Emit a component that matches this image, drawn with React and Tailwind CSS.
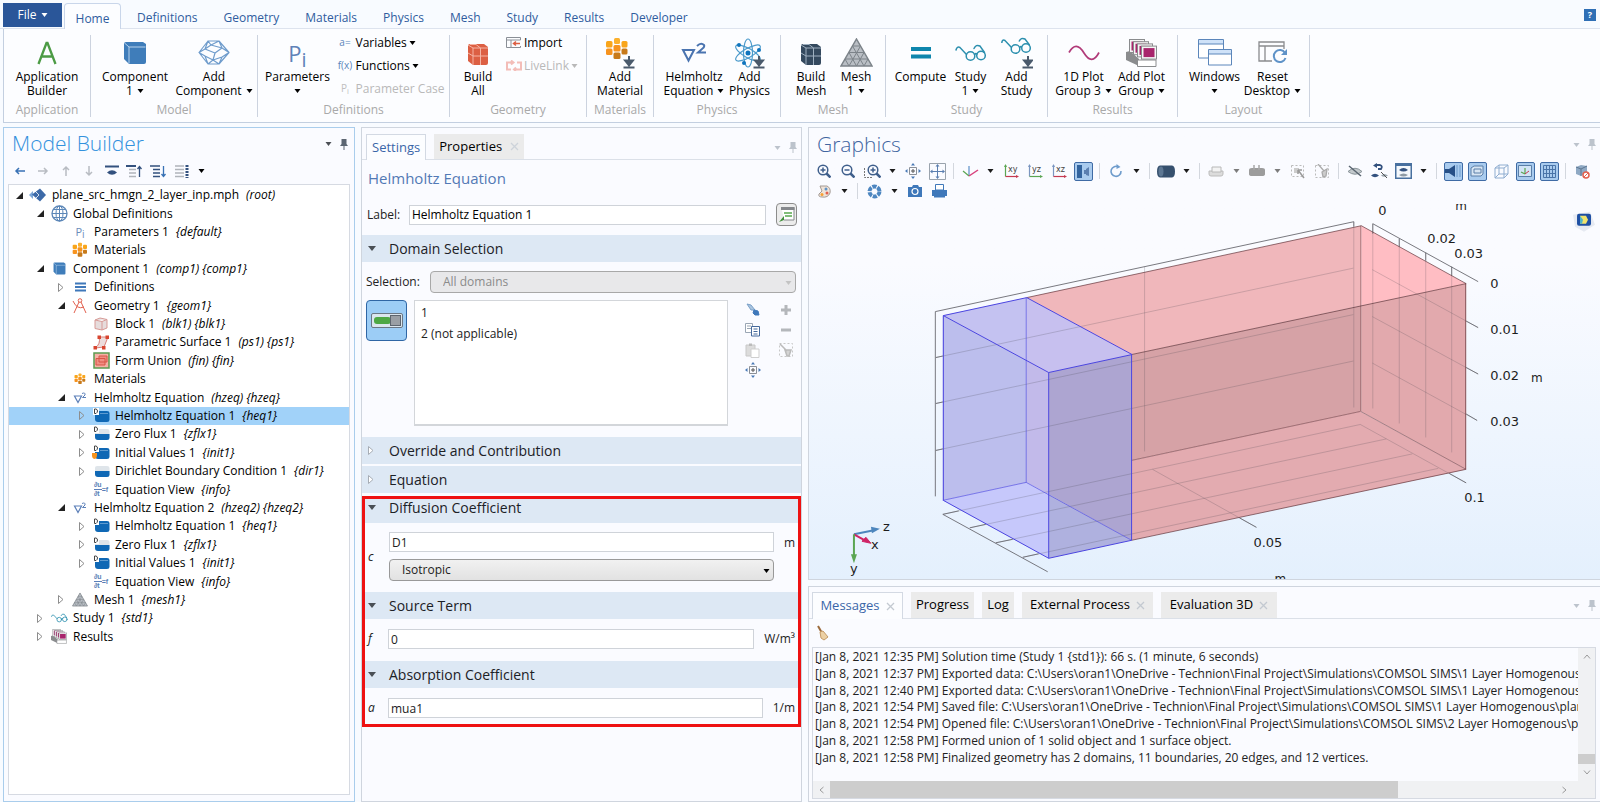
import React from 'react';
import clsx from 'clsx';

const menuTabs = ['Definitions', 'Geometry', 'Materials', 'Physics', 'Mesh', 'Study', 'Results', 'Developer'];

const indents = ['pl-1', 'pl-[25px]', 'pl-[46px]', 'pl-[67px]'];

// level, icon, name, tag, state of the arrow (open, closed or none)
const treeRows = [
  [0, 'root', 'plane_src_hmgn_2_layer_inp.mph', '(root)', 'open'],
  [1, 'globe', 'Global Definitions', '', 'open'],
  [2, 'pi', 'Parameters 1', '{default}', ''],
  [2, 'materials', 'Materials', '', ''],
  [1, 'component', 'Component 1', '(comp1) {comp1}', 'open'],
  [2, 'definitions', 'Definitions', '', 'closed'],
  [2, 'compass', 'Geometry 1', '{geom1}', 'open'],
  [3, 'block', 'Block 1', '(blk1) {blk1}', ''],
  [3, 'surface', 'Parametric Surface 1', '(ps1) {ps1}', ''],
  [3, 'union', 'Form Union', '(fin) {fin}', ''],
  [2, 'materialsSmall', 'Materials', '', ''],
  [2, 'nabla', 'Helmholtz Equation', '(hzeq) {hzeq}', 'open'],
  [3, 'domainD', 'Helmholtz Equation 1', '{heq1}', 'closed'],
  [3, 'boundaryD', 'Zero Flux 1', '{zflx1}', 'closed'],
  [3, 'initialD', 'Initial Values 1', '{init1}', 'closed'],
  [3, 'boundary', 'Dirichlet Boundary Condition 1', '{dir1}', 'closed'],
  [3, 'equation', 'Equation View', '{info}', ''],
  [2, 'nabla', 'Helmholtz Equation 2', '(hzeq2) {hzeq2}', 'open'],
  [3, 'domainD', 'Helmholtz Equation 1', '{heq1}', 'closed'],
  [3, 'boundaryD', 'Zero Flux 1', '{zflx1}', 'closed'],
  [3, 'domainD', 'Initial Values 1', '{init1}', 'closed'],
  [3, 'equation', 'Equation View', '{info}', ''],
  [2, 'mesh', 'Mesh 1', '{mesh1}', 'closed'],
  [1, 'study', 'Study 1', '{std1}', 'closed'],
  [1, 'results', 'Results', '', 'closed'],
];
const selectedRow = 12;

const messages = [
  '[Jan 8, 2021 12:35 PM] Solution time (Study 1 {std1}): 66 s. (1 minute, 6 seconds)',
  '[Jan 8, 2021 12:37 PM] Exported data: C:\\Users\\oran1\\OneDrive - Technion\\Final Project\\Simulations\\COMSOL SIMS\\1 Layer Homogenous\\',
  '[Jan 8, 2021 12:40 PM] Exported data: C:\\Users\\oran1\\OneDrive - Technion\\Final Project\\Simulations\\COMSOL SIMS\\1 Layer Homogenous\\',
  '[Jan 8, 2021 12:54 PM] Saved file: C:\\Users\\oran1\\OneDrive - Technion\\Final Project\\Simulations\\COMSOL SIMS\\1 Layer Homogenous\\plane',
  '[Jan 8, 2021 12:54 PM] Opened file: C:\\Users\\oran1\\OneDrive - Technion\\Final Project\\Simulations\\COMSOL SIMS\\2 Layer Homogenous\\plane',
  '[Jan 8, 2021 12:58 PM] Formed union of 1 solid object and 1 surface object.',
  '[Jan 8, 2021 12:58 PM] Finalized geometry has 2 domains, 11 boundaries, 20 edges, and 12 vertices.',
];

// ---------- icons ----------

function Svg({ w = 18, h = w, box, className, children }) {
  return (
    <svg width={w} height={h} viewBox={box || `0 0 ${w} ${h}`} fill="none" aria-hidden="true" className={clsx('shrink-0', className)}>
      {children}
    </svg>
  );
}

function Caret({ className = 'text-black' }) {
  return (
    <Svg w={7} h={4} className={clsx('inline-block', className)}>
      <path d="M0.500 0H6.500L3.500 4Z" fill="currentColor" />
    </Svg>
  );
}

function Glasses({ w = 32, h = 18, className }) {
  return (
    <Svg w={w} h={h} box="0 0 32 18" className={className}>
      <g stroke="#2b8fae" strokeWidth="1.500" strokeLinecap="round">
        <circle cx="15.500" cy="12" r="4.300" />
        <circle cx="26" cy="11.500" r="4.300" />
        <path d="M19.500 10.500Q20.800 9 22 10M11.500 10.500L5 3.500Q2 2 1 6M29.500 8.500L25 2Q21 0 19 4.500" />
      </g>
    </Svg>
  );
}

function DownArrow() {
  return <path d="M24 19V27M18.500 30.500H29.500M20 23.500L24 28.500L28 23.500Z" stroke="#4a5a6c" strokeWidth="2" fill="#4a5a6c" />;
}

function BrickCube({ color, edge }) {
  return (
    <Svg w={22} h={24} className="mt-1">
      <path d="M1 3Q1 1 3 1H17L21 4V20Q21 22 19 22H6L1 18Z" fill={color} />
      <path d="M1 2L6 5H21M6 5V22M1 10L6 13H21M13.500 5V22M3 1.500L9 1.500L13.500 5" stroke={edge} strokeWidth="1" />
    </Svg>
  );
}

function Hexes() {
  return (
    <g>
      <rect x="9" y="1" width="6" height="6" rx="1.500" fill="#fbb02d" />
      <rect x="1" y="4" width="6.500" height="6.500" rx="1.500" fill="#f9a51a" />
      <rect x="16.500" y="4" width="6" height="6.500" rx="1.500" fill="#f9a51a" />
      <rect x="8.500" y="8" width="7" height="6.500" rx="1.500" fill="#f7931e" />
      <rect x="1" y="11.500" width="6.500" height="6.500" rx="1.500" fill="#f7931e" />
      <rect x="16.500" y="11.500" width="6" height="6" rx="1.500" fill="#c87a1a" />
      <rect x="8.500" y="15.500" width="7" height="6.500" rx="1.500" fill="#c87a1a" />
    </g>
  );
}

function MeshTriangle({ w = 33, h = 29 }) {
  return (
    <Svg w={w} h={h} box="0 0 33 29">
      <path d="M16.500 1L32 28H1Z" fill="#b9bec4" stroke="#7c8389" strokeWidth="1.500" />
      <path d="M12.500 8H20.500M9 14.500H24M5 21H28M12.500 8L24 28M20.500 8L9 28M9 14.500L16.500 28M24 14.500L16.500 28M5 21L9 28M28 21L24 28" stroke="#7c8389" />
    </Svg>
  );
}

function PlotStack({ w = 31, h = 28 }) {
  return (
    <Svg w={w} h={h} box="0 0 31 28">
      <path d="M0 13L4 12L13 20V27L0 21Z" fill="#8a8c8e" />
      {[0, 4, 8, 12].map((d) => (
        <g key={d}>
          <rect x={3.5 + d} y={0.5 + d * 0.55} width="15" height="13" fill="#f5f5f5" stroke="#8a8c8e" />
          <rect x={5.5 + d} y={2.5 + d * 0.55} width="11" height="9" fill="#a8246c" />
        </g>
      ))}
      <path d="M11.500 21H30V27.500H11.500Z" fill="#fff" stroke="#8a8c8e" />
    </Svg>
  );
}

function BlueCube({ w = 24 }) {
  return (
    <Svg w={w} box="0 0 24 24">
      <path d="M1 3Q1 1 3 1H20L23 3V21Q23 23 21 23H6L1 18Z" fill="#3f7dba" />
      <path d="M1.500 2L6 6H22.500M6 6V22.500" stroke="#b8d3ec" />
    </Svg>
  );
}

function Pin({ className = 'text-[#5c6672]' }) {
  return (
    <Svg w={8} h={11} className={className}>
      <path d="M1.500 0H6.500V5L8 7H0L1.500 5ZM3.500 7H4.500V11H3.500Z" fill="currentColor" />
    </Svg>
  );
}

function PanelTools({ dark }) {
  return (
    <div className="flex items-center gap-2">
      <button aria-label="Panel menu" className="flex"><Caret className={dark ? 'text-[#4b4f55]' : 'text-[#bcc3cc]'} /></button>
      <button aria-label="Pin panel" className="flex"><Pin className={dark ? 'text-[#5c6672]' : 'text-[#bcc3cc]'} /></button>
    </div>
  );
}

function DomainIcon({ half, letter, initial }) {
  return (
    <Svg w={18} h={16}>
      <path d="M3 4.500Q3 3 5 3H15Q17.500 3 17.500 5V12Q17.500 14 15 14H6Q3 14 3 11Z" fill={half ? '#dfe5ea' : '#0f68b5'} />
      {half && <path d="M3 8H17.500V12Q17.500 14 15 14H6Q3 14 3 11Z" fill="#0f68b5" />}
      {!half && <path d="M8 5.500H16" stroke="#5f9bd0" />}
      {initial && <path d="M0 8H5V10Q5 14 2 14Q0 13 0 11Z" fill="#f7931e" />}
      {letter && (
        <g>
          <rect x="1" width="6" height="7" fill="#fff" />
          <path d="M2.500 1H4Q5.500 1.500 5.500 3T4 5.500H2.500Z" stroke="#444" />
        </g>
      )}
    </Svg>
  );
}

function TreeIcon({ name }) {
  switch (name) {
    case 'root':
      return <Svg w={18} h={14}><path d="M0 7L4 3V11Z" fill="#7ba6d8" /><path d="M3 6.500L11 0.500L17 7L11 13.500Z" fill="#3d6aa8" /><path d="M5 2L10 7L5 12" stroke="#fff" strokeWidth="0.800" /></Svg>;
    case 'globe':
      return <Svg w={17}><circle cx="8.500" cy="8.500" r="7.500" stroke="#5c87b8" strokeWidth="1.300" /><ellipse cx="8.500" cy="8.500" rx="3.500" ry="7.500" stroke="#5c87b8" /><path d="M1 8.500H16M8.500 1V16M2.500 4.500H14.500M2.500 12.500H14.500" stroke="#5c87b8" /></Svg>;
    case 'pi':
      return <span className="text-[11px] leading-3 text-[#6a8cba]">P<sub className="text-[10px]">i</sub></span>;
    case 'materials':
      return <Svg w={16} box="0 0 24 24"><Hexes /></Svg>;
    case 'materialsSmall':
      return <Svg w={12} box="0 0 24 24"><Hexes /></Svg>;
    case 'component':
      return <BlueCube w={13} />;
    case 'definitions':
      return <Svg w={11} h={10}><path d="M0 1.500H11M0 5H11M0 8.500H11" stroke="#3f78ba" strokeWidth="1.800" /></Svg>;
    case 'compass':
      return <Svg w={16}><circle cx="8" cy="2.500" r="1.800" stroke="#e2604e" /><path d="M7 4L2 15M9 4L14 15M1 3Q5 12 12 9" stroke="#e2604e" /></Svg>;
    case 'block':
      return <Svg w={14}><path d="M1 3L6 1L13 2.500V11L8 13L1 11.500ZM1 3L8 4.500L13 2.500M8 4.500V13" fill="#e6dcdc" stroke="#d79a96" /></Svg>;
    case 'surface':
      return <Svg w={17} h={15}><path d="M6 2L15 2Q13 7 11 12L2 13Q8 9 6 2Z" fill="#ecdcdc" stroke="#d98079" /><path d="M4.500 0.500H8V4H4.500ZM12.500 0.500H16V4H12.500ZM0.500 11H4V14.500H0.500ZM9 11H12.500V14.500H9Z" fill="#d8452f" /></Svg>;
    case 'union':
      return <Svg w={17}><rect x="1" y="1" width="15" height="15" fill="#f5b0a6" stroke="#5b9a50" strokeWidth="1.500" /><path d="M3 6.500H12V13H3ZM6 4H14V10H6Z" fill="#f08f84" stroke="#d85546" /></Svg>;
    case 'nabla':
      return <Svg w={14} h={12}><path d="M1.500 4H8.500L5 10.500Z" stroke="#5b7fb8" strokeWidth="1.200" /><path d="M9 1.500Q12.500 0 12 3L9.500 5.500H13" stroke="#5b7fb8" /></Svg>;
    case 'domainD':
      return <DomainIcon letter />;
    case 'boundaryD':
      return <DomainIcon letter half />;
    case 'initialD':
      return <DomainIcon letter initial />;
    case 'boundary':
      return <DomainIcon half />;
    case 'equation':
      return (
        <span className="flex items-center font-['Liberation_Sans',sans-serif] text-[7px] leading-[8px] font-bold text-[#5b7fb8]">
          <span className="flex flex-col"><span className="border-b border-[#5b7fb8]">∂u</span><span>∂t</span></span>=f
        </span>
      );
    case 'mesh':
      return <MeshTriangle w={16} h={15} />;
    case 'study':
      return <Glasses w={17} h={10} />;
    case 'results':
      return <PlotStack w={16} h={15} />;
    default:
      return null;
  }
}

// ---------- ribbon ----------

function BigButton({ icon, lines, caret, className }) {
  return (
    <button className={clsx('flex flex-col items-center', className)}>
      <span className="h-[35px] flex items-center justify-center">{icon}</span>
      {lines.map((line, i) => (
        <span key={i} className="h-3.5 leading-3.5 flex items-center gap-1 whitespace-nowrap">
          {line}
          {caret && i === lines.length - 1 && <Caret />}
        </span>
      ))}
    </button>
  );
}

function SmallButton({ icon, label, caret, disabled }) {
  return (
    <button disabled={disabled} className="h-[23px] flex items-center gap-0.5 whitespace-nowrap disabled:text-[#b9b9b9]">
      <span className="w-[15px] mr-px flex justify-center text-[10px] text-[#5b86bb]">{icon}</span>
      {label}
      {caret && <Caret className={disabled ? 'text-[#b9b9b9]' : 'text-black'} />}
    </button>
  );
}

function Group({ label, className, children }) {
  return (
    <div className={clsx('flex flex-col border-r border-[#ccd3df] h-[82px] mt-1.5 shrink-0', className)}>
      <div className="h-[68px] flex justify-center">{children}</div>
      <div className="h-3.5 leading-3.5 text-center text-[#a9a9a9]">{label}</div>
    </div>
  );
}

function Ribbon() {
  return (
    <header className="pt-[3px] text-[12px]">
      <nav className="h-[26px] flex items-stretch text-[#2f5c9e] border-b border-[#dde3ee]">
        <button className="ml-[3px] mr-0.5 w-[59px] h-6 bg-[#2a5699] text-white flex items-center justify-center gap-1">
          File <Caret className="text-white" />
        </button>
        <a href="#home" className="w-[57px] h-[26px] pt-1 flex items-center justify-center bg-[#fcfdff] border border-b-0 border-[#c9d6ea] rounded-t-sm">Home</a>
        <div className="flex items-center gap-[26px] pt-1 ml-4">
          {menuTabs.map((tab) => <a key={tab} href={`#${tab.toLowerCase()}`}>{tab}</a>)}
        </div>
        <button aria-label="Help" className="ml-auto mr-1 mt-1.5 size-3 bg-[#2f6fb5] text-white text-[9px] leading-3 font-bold">?</button>
      </nav>
      <div className="ml-[3px] h-[94px] bg-[#fcfdff] border-l border-b border-[#c3cfe0] flex text-black">
        <Group label="Application" className="w-[87px]">
          <BigButton icon={<Svg w={20} h={24}><path d="M1.500 23L9.500 2H10.500L18.500 23M4.500 15.500H15.500" stroke="#4c9b45" strokeWidth="2.300" /></Svg>} lines={['Application', 'Builder']} />
        </Group>
        <Group label="Model" className="w-[167px]">
          <BigButton className="w-20" icon={<BlueCube />} lines={['Component', '1']} caret />
          <BigButton
            className="w-[78px]"
            icon={(
              <Svg w={32} h={25}>
                <path d="M10 1H21L31 12.500L21 24H10L1 12.500ZM10 1L7 9L1 12.500L7 16L10 24M21 1L13 5L7 9M13 5L10 1M7 16L15 20L21 24M15 20L10 24M13 5L24 8L31 12.500L24 17L15 20M24 8L21 1M24 17L21 24M24 8L17 13L15 20M17 13L7 9" stroke="#6f9ccc" strokeWidth="1.200" strokeLinejoin="round" />
              </Svg>
            )}
            lines={['Add', 'Component']}
            caret
          />
        </Group>
        <Group label="Definitions" className="w-[192px]">
          <BigButton className="w-[72px] mr-1" icon={<span className="text-[22px] leading-6 text-[#5f82b8]">P<sub className="text-[20px]">i</sub></span>} lines={['Parameters', '']} caret />
          <div className="w-[108px] -mt-1">
            <SmallButton icon="a=" label="Variables" caret />
            <SmallButton icon="f(x)" label="Functions" caret />
            <SmallButton icon={<span className="text-[#c0c0c0]">P<sub>i</sub></span>} label="Parameter Case" disabled />
          </div>
        </Group>
        <Group label="Geometry" className="w-[137px]">
          <BigButton className="w-12" icon={<BrickCube color="#dc5f43" edge="#f6b5a5" />} lines={['Build', 'All']} />
          <div className="w-20 -mt-1 pl-1">
            <SmallButton icon={<Svg w={15} h={11}><path d="M0.500 0.500H14.500V3H0.500ZM0.500 3V10.500H5V3M5 10.500H14.500V9" stroke="#8a8f96" /><path d="M14 6.500H8M10 4.500L7.500 6.500L10 8.500" stroke="#dc5f43" strokeWidth="1.500" /></Svg>} label="Import" />
            <SmallButton icon={<Svg w={16} h={11}><path d="M5 9.500H1V2.500H7M5 0.500L7.500 2.500L5 4.500M11 2.500H15V9.500H8M10 7.500L8 9.500L10 11" stroke="#f3bdb8" strokeWidth="2" /></Svg>} label="LiveLink" caret disabled />
          </div>
        </Group>
        <Group label="Materials" className="w-[67px]">
          <BigButton icon={<Svg w={30} h={32}><Hexes /><DownArrow /></Svg>} lines={['Add', 'Material']} />
        </Group>
        <Group label="Physics" className="w-[127px]">
          <BigButton
            className="w-[65px]"
            icon={<Svg w={26} h={22}><path d="M2 8H13L7.500 18.500Z" stroke="#4a74b0" strokeWidth="2" /><path d="M16 4Q20 0 23 3Q24 5 21 7L17 10.500H25" stroke="#4a74b0" strokeWidth="2" /></Svg>}
            lines={['Helmholtz', 'Equation']}
            caret
          />
          <BigButton
            className="w-[46px]"
            icon={(
              <Svg w={32} h={32}>
                <g stroke="#4b9acb" strokeWidth="1.200">
                  <ellipse cx="14" cy="16" rx="4.500" ry="14" />
                  <ellipse cx="14" cy="16" rx="4.500" ry="14" transform="rotate(60 14 16)" />
                  <ellipse cx="14" cy="16" rx="4.500" ry="14" transform="rotate(-60 14 16)" />
                </g>
                <g fill="#0f74bd"><circle cx="14" cy="16" r="2.500" /><circle cx="5" cy="8" r="2" /><circle cx="25" cy="13" r="2" /><circle cx="10" cy="26" r="2" /></g>
                <g transform="translate(1 0)"><DownArrow /></g>
              </Svg>
            )}
            lines={['Add', 'Physics']}
          />
        </Group>
        <Group label="Mesh" className="w-[105px]">
          <BigButton className="w-[46px]" icon={<BrickCube color="#34495e" edge="#9fb0c0" />} lines={['Build', 'Mesh']} />
          <BigButton className="w-11" icon={<MeshTriangle />} lines={['Mesh', '1']} caret />
        </Group>
        <Group label="Study" className="w-[162px]">
          <BigButton className="w-[54px]" icon={<Svg w={20} h={12}><path d="M0 2H20M0 9.500H20" stroke="#0e86ad" strokeWidth="4" /></Svg>} lines={['Compute', '']} />
          <BigButton className="w-[46px]" icon={<Glasses />} lines={['Study', '1']} caret />
          <BigButton
            className="w-[46px]"
            icon={<Svg w={32} h={32}><g stroke="#2b8fae" strokeWidth="1.500"><circle cx="14.500" cy="12" r="4.300" /><circle cx="25" cy="11" r="4.300" /><path d="M18.500 10.500Q19.800 9 21 10M10.500 10.500L4 3.500Q1 2 0.800 6M28.500 8L24 2Q20 0 18 4.500" /></g><g transform="translate(3 0)"><DownArrow /></g></Svg>}
            lines={['Add', 'Study']}
          />
        </Group>
        <Group label="Results" className="w-[130px]">
          <BigButton className="w-[58px]" icon={<Svg w={32} h={16}><path d="M1 7.500Q8 -5 16 8T31 7.500" stroke="#b13a79" strokeWidth="1.700" /></Svg>} lines={['1D Plot', 'Group 3']} caret />
          <BigButton className="w-[58px]" icon={<PlotStack />} lines={['Add Plot', 'Group']} caret />
        </Group>
        <Group label="Layout" className="w-[132px]">
          <BigButton
            className="w-[58px]"
            icon={<Svg w={34} h={27}><path d="M0.500 0.500H25.500V19H0.500Z" fill="#fff" stroke="#5b86bb" /><path d="M1 1H25V5H1Z" fill="#cfe2f8" /><path d="M10.500 10.500H33.500V26H10.500Z" fill="#fff" stroke="#5b86bb" /><path d="M11 11H33V15H11Z" fill="#cfe2f8" /><path d="M0.500 5H25.500M10.500 15H33.500" stroke="#5b86bb" /></Svg>}
            lines={['Windows', '']}
            caret
          />
          <BigButton
            className="w-[58px]"
            icon={<Svg w={30} h={24}><path d="M1 1H26V5H1ZM1 5V20H14M7 5V20M26 5V8" stroke="#8a8c8e" strokeWidth="1.300" /><path d="M27 12A6 6 0 1 0 27.500 17" stroke="#5f93c8" strokeWidth="2" /><path d="M29 8V14H23Z" fill="#5f93c8" /></Svg>}
            lines={['Reset', 'Desktop']}
            caret
          />
        </Group>
      </div>
    </header>
  );
}

// ---------- model builder ----------

function ModelBuilder() {
  return (
    <section className="border border-[#a9cdec] bg-[#fafbff] flex flex-col px-1 pb-1.5 min-w-0">
      <div className="h-8 flex items-center justify-between pl-1 pr-0.5">
        <h1 className="text-[21px] font-light text-[#3291dd]">Model Builder</h1>
        <PanelTools dark />
      </div>
      <div className="h-[22px] mb-0.5 flex items-center text-[#3f6ba5]">
        <button aria-label="Previous" className="w-[23px] flex justify-center"><Svg w={12}><path d="M11 6H2M5 3L2 6L5 9" stroke="#3972b5" strokeWidth="1.500" /></Svg></button>
        <button aria-label="Next" disabled className="w-[23px] flex justify-center"><Svg w={12}><path d="M1 6H10M7 3L10 6L7 9" stroke="#b8bcc2" strokeWidth="1.500" /></Svg></button>
        <button aria-label="Up" disabled className="w-[23px] flex justify-center"><Svg w={12}><path d="M6 11V2M3 5L6 2L9 5" stroke="#b8bcc2" strokeWidth="1.500" /></Svg></button>
        <button aria-label="Down" disabled className="w-[23px] flex justify-center"><Svg w={12}><path d="M6 1V10M3 7L6 10L9 7" stroke="#b8bcc2" strokeWidth="1.500" /></Svg></button>
        <button aria-label="Show" className="w-[23px] flex justify-center"><Svg w={14} h={12}><path d="M0 1.500H14" stroke="#33517e" strokeWidth="2" /><path d="M2 7.500Q7 3 12 7.500Q7 12 2 7.500Z" fill="#33517e" /></Svg></button>
        <button aria-label="Collapse all" className="w-[23px] flex justify-center"><Svg w={17} h={13}><path d="M0 1H10" stroke="#33517e" strokeWidth="2" /><path d="M3 4.500H10M3 8H10M3 11.500H10" stroke="#b0b4ba" strokeWidth="1.500" /><path d="M13.500 12V2M11.500 4L13.500 1.500L15.500 4" stroke="#33517e" strokeWidth="1.300" /></Svg></button>
        <button aria-label="Expand all" className="w-[24px] flex justify-center"><Svg w={17} h={13}><path d="M0 1H10M3 4.500H10M3 8H10M3 11.500H10" stroke="#33517e" strokeWidth="1.700" /><path d="M13.500 1V11M11.500 9L13.500 11.500L15.500 9" stroke="#3972b5" strokeWidth="1.300" /></Svg></button>
        <button aria-label="Columns" className="w-[23px] flex justify-center"><Svg w={14} h={13}><path d="M0 1H9M0 4.500H9M0 8H9M0 11.500H9" stroke="#b0b4ba" strokeWidth="1.700" /><path d="M12 0V13" stroke="#33517e" strokeWidth="3" strokeDasharray="2 1" /></Svg></button>
        <button aria-label="Column menu" className="w-4 flex justify-center"><Caret /></button>
      </div>
      <div className="flex-1 bg-white border border-[#d6dae2] overflow-hidden pt-px">
        <ul className="h-[460px] grid auto-rows-fr text-[12px]">
          {treeRows.map(([level, icon, name, tag, arrow], i) => (
            <li key={i} className={clsx('flex items-center whitespace-nowrap min-h-0', indents[level], i === selectedRow && 'bg-[#a1d2f9]')}>
              <span className="w-3 flex justify-center">
                {arrow === 'open' && <Svg w={7}><path d="M7 0V7H0Z" fill="#222" /></Svg>}
                {arrow === 'closed' && <Svg w={6} h={9}><path d="M0.500 0.500L5 4.500L0.500 8.500Z" stroke="#8d8d8d" /></Svg>}
              </span>
              <span className="w-[18px] ml-1 mr-[5px] h-[18px] flex items-center justify-center"><TreeIcon name={icon} /></span>
              {name}
              {tag && <i className="ml-[7px]">{tag}</i>}
            </li>
          ))}
        </ul>
      </div>
    </section>
  );
}

// ---------- settings ----------

function SectionHeader({ title, open, className }) {
  return (
    <button aria-expanded={!!open} className={clsx('w-full h-[27px] bg-[#dde8f4] flex items-center text-[14px] text-[#1c2126]', className)}>
      <span className="w-[27px] pl-1.5">
        {open
          ? <Svg w={8} h={5}><path d="M0 0H8L4 5Z" fill="#4a4f55" /></Svg>
          : <Svg w={6} h={9}><path d="M0.500 0.500L5 4.500L0.500 8.500Z" stroke="#a7adb5" fill="#fff" /></Svg>}
      </span>
      {title}
    </button>
  );
}

function Field({ id, symbol, value, unit, className = 'pb-3' }) {
  return (
    <div className={clsx('flex items-center pt-2.5 pl-1.5 pr-1.5', className)}>
      <label htmlFor={id} className="w-5 italic">{symbol}</label>
      <input id={id} defaultValue={value} className="flex-1 min-w-0 h-5 border border-[#cfd3d9] bg-white px-0.5" />
      <span className="text-right pl-2.5">{unit}</span>
    </div>
  );
}

const disabledSelect = 'border-[#a8a8a8] bg-[#e8e8ea] text-[#8b8b8b]';

function DropDown({ id, value, disabled, className }) {
  return (
    <div className={clsx('relative', className)}>
      <select id={id} disabled={disabled} aria-label={value} className={clsx('w-full h-[22px] appearance-none rounded-sm border pl-3 opacity-100', disabled ? disabledSelect : 'border-[#999] bg-linear-to-b from-[#f1f1f1] to-[#e2e2e2] text-[#222]')}>
        <option>{value}</option>
      </select>
      <Caret className={clsx('absolute right-1 top-2.5 pointer-events-none', disabled ? 'text-[#c3c3c3]' : 'text-black')} />
    </div>
  );
}

function SettingsPanel() {
  return (
    <section className="border border-[#cfd5de] bg-[#fafbff] text-[12px] text-[#222] min-w-0">
      <div className="h-8 pt-1.5 pl-1 pr-1 flex items-start border-b border-[#dbe0e8]">
        <button className="h-[26px] px-[5px] bg-[#fcfdff] border border-b-0 border-[#d3d9e3] text-[13px] text-[#3a66a8]">Settings</button>
        <button className="h-[25px] ml-2 px-[5px] bg-[#ebebeb] text-[13px] text-black flex items-center gap-2">
          Properties <Svg w={9}><path d="M1 1L8 8M8 1L1 8" stroke="#cdd3da" strokeWidth="1.300" /></Svg>
        </button>
        <div className="ml-auto mt-2"><PanelTools /></div>
      </div>
      <h2 className="h-9 leading-9 pl-1.5 text-[15px] text-[#5279b5]">Helmholtz Equation</h2>
      <div className="h-[39px] pb-0.5 flex items-center pl-[5px] pr-1">
        <label htmlFor="node-label" className="w-[42px]">Label:</label>
        <input id="node-label" defaultValue="Helmholtz Equation 1" className="flex-1 min-w-0 h-5 border border-[#cfd3d9] bg-white px-0.5 text-black" />
        <button aria-label="Go to source" className="ml-2.5 w-[21px] h-[23px] border border-[#8c8c8c] bg-[#ececec] rounded-sm flex items-center justify-center">
          <Svg w={16} h={17}><path d="M2.500 1.500H15V14H5" fill="#fff" stroke="#85888c" /><path d="M2 1H15.500V4H2Z" fill="#85888c" /><path d="M5 7H13M6 10H13" stroke="#58a84e" strokeWidth="1.500" /><path d="M0 16L5 10V14Z" fill="#3f8f38" /></Svg>
        </button>
      </div>
      <SectionHeader title="Domain Selection" open />
      <div className="h-[175px] pt-[9px] pl-1 pr-[5px]">
        <div className="flex items-center">
          <label htmlFor="selection" className="w-16">Selection:</label>
          <DropDown id="selection" value="All domains" disabled className="flex-1" />
        </div>
        <div className="flex mt-[7px]">
          <button aria-label="Active" aria-pressed="true" className="size-[41px] border border-[#2f66a5] rounded-sm bg-[#9ccdf6] flex items-center justify-center">
            <Svg w={32} h={15}><rect x="0.500" y="0.500" width="31" height="14" rx="1.500" fill="#dbe6ee" stroke="#6b7784" /><rect x="3" y="4" width="17" height="7" rx="3" fill="#4ea845" /><rect x="19.500" y="2.500" width="10" height="10" fill="#9a9fa5" stroke="#5e6670" /></Svg>
          </button>
          <ul className="ml-[7px] h-[126px] flex-1 bg-white border border-b-2 border-[#d3d6da] px-1.5 pt-px leading-[21px]">
            <li>1</li>
            <li>2 (not applicable)</li>
          </ul>
          <div className="w-[66px] ml-2 -mr-1.5 grid grid-cols-2 auto-rows-[20px] place-items-center">
            <button aria-label="Create selection"><Svg w={14} className="mx-auto"><path d="M1 1L5 2L9 7L5 7Z" fill="#a9c4e0" stroke="#7aa0c8" /><path d="M8 7L12 8L13 12L9 12L7 10Z" fill="#3f78ba" stroke="#3f78ba" /></Svg></button>
            <button aria-label="Add"><Svg w={12}><path d="M6 1V11M1 6H11" stroke="#b4b7bb" strokeWidth="3" /></Svg></button>
            <button aria-label="Copy"><Svg w={16} h={14}><path d="M0.500 0.500H7.500V9.500H0.500Z" fill="#fff" stroke="#9aa6b4" /><path d="M2 3H6M2 5.500H6" stroke="#9aa6b4" /><path d="M6.500 3.500H14.500V13H6.500Z" fill="#fff" stroke="#45699c" /><path d="M8.500 6H12.500M8.500 8.500H12.500M8.500 11H12.500" stroke="#45699c" /></Svg></button>
            <button aria-label="Remove"><Svg w={12}><path d="M1 6H11" stroke="#b4b7bb" strokeWidth="3" /></Svg></button>
            <button aria-label="Paste" disabled><Svg w={15}><path d="M1 2H10V13H1Z" fill="#dcdcdc" stroke="#c8c8c8" /><path d="M4 0.500H7V3H4Z" fill="#bbb" /><path d="M6 6H14V14.500H6Z" fill="#fff" stroke="#cfcfcf" /></Svg></button>
            <button aria-label="Clear" disabled><Svg w={14}><path d="M0.500 0.500H13.500V13.500H0.500Z" stroke="#c8c8c8" strokeDasharray="2 2" /><path d="M1 1L8 8M6 7H12L10 13H8Z" stroke="#bbb" strokeWidth="1.500" fill="#d4d4d4" /></Svg></button>
            <button aria-label="Zoom to selection"><ExtentsIcon /></button>
          </div>
        </div>
      </div>
      <SectionHeader title="Override and Contribution" />
      <SectionHeader title="Equation" className="mt-0.5" />
      <div className="mt-[3px] outline-3 -outline-offset-3 outline-[#ee1111]">
        <SectionHeader title="Diffusion Coefficient" open className="pb-1" />
        <div className="flex items-center pl-1.5 pr-1.5 pt-[9px] pb-[11px]">
          <label htmlFor="coef-c" className="w-[21px] italic">c</label>
          <div className="flex-1 flex flex-col gap-[7px]">
            <input id="coef-c" defaultValue="D1" className="h-5 border border-[#cfd3d9] bg-white px-0.5" />
            <DropDown id="coef-type" value="Isotropic" />
          </div>
          <span className="w-[21px] pb-7 text-right">m</span>
        </div>
        <SectionHeader title="Source Term" open />
        <Field id="source-f" symbol="f" value="0" unit={<>W/m³</>} />
        <SectionHeader title="Absorption Coefficient" open />
        <Field id="absorption-a" symbol="a" value="mua1" unit="1/m" className="pb-[9px]" />
      </div>
    </section>
  );
}

// ---------- graphics ----------

function ExtentsIcon() {
  return (
    <Svg w={16}>
      <path d="M4.500 4.500H11.500V11.500H4.500Z" stroke="#8a8f96" />
      <path d="M8 6V10M6 8H10" stroke="#555" />
      <path d="M6 2.500L8 0L10 2.500ZM6 13.500L8 16L10 13.500ZM2.500 6L0 8L2.500 10ZM13.500 6L16 8L13.500 10Z" fill="#4879b5" />
    </Svg>
  );
}

function Magnifier({ sign }) {
  return (
    <g>
      <circle cx="6" cy="6" r="4.800" stroke="#3f5f8c" strokeWidth="1.500" />
      <path d="M9.500 9.500L13.500 13.500" stroke="#3f5f8c" strokeWidth="2.500" />
      <path d={sign === '+' ? 'M6 3.500V8.500M3.500 6H8.500' : 'M3.500 6H8.500'} stroke="#3f5f8c" strokeWidth="1.500" />
    </g>
  );
}

function AxisPlane({ label, side, base }) {
  return (
    <Svg w={15} h={14}>
      <path d="M1.500 12.500V1" stroke={side} strokeWidth="1.200" />
      <path d="M0 3L1.500 0L3 3Z" fill={side} />
      <path d="M1.500 12.500H13" stroke={base} strokeWidth="1.200" />
      <path d="M12 11L15 12.500L12 14Z" fill={base} />
      <text x="4" y="8" fontSize="8" fontFamily="DejaVu Sans, sans-serif" fill="#444">{label}</text>
    </Svg>
  );
}

function Pressed({ children }) {
  return (
    <span className="size-[19px] border border-[#3f6ba5] bg-[#a9cbee] rounded-xs flex items-center justify-center">{children}</span>
  );
}

const green = '#5aa552';
const red = '#c53a50';

const toolbarTop = [
  ['Zoom in', <Svg w={14}><Magnifier sign="+" /></Svg>],
  ['Zoom out', <Svg w={14}><Magnifier sign="-" /></Svg>],
  ['Zoom box', <Svg w={17} h={14}><path d="M0.500 4V13.500H9" stroke="#777" strokeDasharray="2 1" /><g transform="translate(3 0)"><Magnifier sign="+" /></g></Svg>],
  'caret',
  ['Zoom extents', <ExtentsIcon />],
  ['Zoom to selection', <Svg w={17}><path d="M0.500 0.500H16.500V16.500H0.500Z" stroke="#9aa3ad" /><path d="M8.500 2V15M2 8.500H15" stroke="#5b7fb0" /><path d="M6.500 3.500L8.500 1L10.500 3.500ZM6.500 13.500L8.500 16L10.500 13.500ZM3.500 6.500L1 8.500L3.500 10.500ZM13.500 6.500L16 8.500L13.500 10.500Z" fill="#5b7fb0" /></Svg>],
  'sep',
  ['Default view', <Svg w={17} h={13}><path d="M7 11V1" stroke="#5b8fc8" strokeWidth="1.200" /><path d="M7 11L1 6" stroke={green} strokeWidth="1.200" /><path d="M7 11L16 5" stroke="#d8417c" strokeWidth="1.500" /></Svg>],
  'caret',
  ['Go to XY view', <AxisPlane label="xy" side={green} base={red} />],
  ['Go to YZ view', <AxisPlane label="yz" side="#7a95c0" base={green} />],
  ['Go to XZ view', <AxisPlane label="xz" side="#7a95c0" base={red} />],
  ['Projection', <Pressed><Svg w={15}><path d="M1 1H6V14H1Z" fill="#33649e" /><path d="M8 6H10V10H8ZM10 5L13 3V12L10 11Z" fill="#5b7fb0" /></Svg></Pressed>],
  'sep',
  ['Rotate', <Svg w={14}><path d="M9.500 3A5 5 0 1 0 12 7" stroke="#6f9ccc" strokeWidth="1.600" /><path d="M7.500 0V5L11.500 3Z" fill="#6f9ccc" /></Svg>],
  'caret',
  'sep',
  ['Scene appearance', <Svg w={18} h={13}><path d="M3 0.500H15Q18 1 18 6.500T15 12.500H3Q0 12 0 6.500T3 0.500Z" fill="#36506e" /><ellipse cx="4" cy="6.500" rx="2.500" ry="5" fill="#5d7793" /></Svg>],
  'caret',
  'sep',
  ['Select boxes', <Svg w={16} h={13}><path d="M1 6H15V9Q15 11 13 11H3Q1 11 1 9Z" fill="#dcdcdc" stroke="#bcbcbc" /><path d="M4 2H13V7H4Z" fill="#f3f3f3" stroke="#b8b8b8" /></Svg>],
  'caretMuted',
  ['Select entities', <Svg w={16} h={12}><path d="M0 5Q0 3 3 3H13Q16 3 16 5V9Q16 11 13 11H3Q0 11 0 9Z" fill="#9c9c9c" /><path d="M5 0V5M10 0V5" stroke="#a8a8a8" strokeWidth="1.500" /></Svg>],
  'caretMuted',
  ['Select box', <Svg w={15}><path d="M0.500 1.500H12.500V12.500H0.500Z" stroke="#bbb" strokeDasharray="2 2" /><path d="M3 4H8V9H3Z" fill="#ccc" /><path d="M7 6L13 14M7 6V10M7 6H11" stroke="#999" strokeWidth="1.500" /></Svg>],
  ['Deselect box', <Svg w={15}><path d="M0.500 1.500H13.500V13.500H0.500Z" stroke="#bbb" strokeDasharray="2 2" /><path d="M3 0L9 7M7 8L12 5L11 12L8 13Z" stroke="#aaa" strokeWidth="1.300" fill="#ccc" /></Svg>],
  'sep',
  ['Hide', <Svg w={16} h={12}><path d="M1 6.500Q8 0 15 6.500Q8 12 1 6.500Z" fill="#c3c9cc" stroke="#8a9499" /><path d="M2 1L14 11" stroke="#5a6570" strokeWidth="1.500" /></Svg>],
  ['Reset hiding', <Svg w={17} h={16}><path d="M4 2H9Q12 3 10 6H7" stroke="#34527f" strokeWidth="1.800" /><path d="M2 2.500L6 0V5Z" fill="#34527f" /><path d="M0 12.500Q4 9 8 12.500Q4 16 0 12.500Z" fill="#34527f" /><path d="M10 12.500Q13 9.500 17 12.500Q13 15 10 12.500Z" fill="#9aa6b0" /><path d="M10 9L16 15" stroke="#555" /></Svg>],
  ['View hidden', <Svg w={17} h={16}><path d="M0.750 0.750H16.250V15.250H0.750Z" fill="#f4f8fc" stroke="#48709f" strokeWidth="1.500" /><path d="M0 2H17" stroke="#48709f" strokeWidth="2" /><path d="M4 7Q8.500 3 13 7Q8.500 10 4 7Z" fill="#34527f" /><path d="M4 12Q8.500 9 13 12Q8.500 15 4 12Z" fill="#8f9ba5" /></Svg>],
  'caret',
  'sep',
  ['Scene light', <Pressed><Svg w={16} h={14}><path d="M0 5H4L10 1V13L4 9H0Z" fill="#264f86" /><path d="M12 1V13M15 1V13" stroke="#6d9acb" /></Svg></Pressed>],
  ['Transparency', <Pressed><Svg w={14} h={12}><path d="M1 3L4 1H13V9L11 11H1Z" fill="#d7e5f3" stroke="#5b7fa8" /><path d="M4 4H11V8H4Z" stroke="#5b7fa8" /></Svg></Pressed>],
  ['Wireframe', <Svg w={15}><path d="M1 4H10V14H1ZM5 1H14V10L10 14M10 4L14 1M1 4L5 1V10H14M5 10L1 14" stroke="#8fadd0" /></Svg>],
  ['Show axes', <Pressed><Svg w={14} h={12}><path d="M0.500 0.500H13.500V11.500H0.500Z" fill="#d2e4f6" stroke="#5b7fa8" /><path d="M7 9V3M7 9L3 7" stroke={green} strokeWidth="1.200" /><path d="M7 9L11 6" stroke={red} /></Svg></Pressed>],
  ['Show grid', <Pressed><Svg w={13}><path d="M0.500 0.500H12.500V12.500H0.500ZM3.500 0V13M6.500 0V13M9.500 0V13M0 4.500H13M0 8.500H13" stroke="#4a74a8" /></Svg></Pressed>],
  'sep',
  ['Clipping', <Svg w={15}><path d="M1 3L6 1L12 2V9L6 12L1 10Z" fill="#8fa9c4" /><path d="M1 3L6 5L12 2M6 5V12" stroke="#5d7690" /><circle cx="11" cy="11" r="3" fill="#fff" stroke="#e2604e" strokeWidth="1.500" /><path d="M9 13L13 9" stroke="#e2604e" /></Svg>],
];

const toolbarBottom = [
  ['Color theme', <Svg w={13}><path d="M2 1H9Q13 3 12 8Q10 13 4 12Q0 12 1 9L4 6Z" fill="#efe3d8" stroke="#a39a94" /><circle cx="8" cy="4" r="1.500" fill="#5f93c8" /><circle cx="9" cy="8" r="1.500" fill="#e2604e" /><circle cx="4" cy="9.500" r="1.500" fill="#f7a032" /></Svg>],
  'caret',
  'sep',
  ['Environment', <Svg w={15}><circle cx="7.500" cy="7.500" r="5" stroke="#4d86c0" strokeWidth="4" strokeDasharray="4.200 1" /></Svg>],
  'caret',
  ['Image snapshot', <Svg w={14} h={12}><path d="M0 2H4L5 0H10L11 2H14V12H0Z" fill="#3f78ba" /><circle cx="7" cy="6.500" r="3" fill="#3f78ba" stroke="#fff" strokeWidth="1.200" /></Svg>],
  ['Print', <Svg w={15} h={14}><path d="M3.500 0.500H11.500V6H3.500Z" fill="#fff" stroke="#3f78ba" /><path d="M0 6H15V12H0Z" fill="#3f78ba" /><path d="M2 12.500H13" stroke="#3f78ba" strokeWidth="2" /></Svg>],
];

function Toolbar({ items }) {
  return (
    <div className="h-5 flex items-center pl-[3px] overflow-hidden">
      {items.map((item, i) => {
        if (item === 'sep') {
          return <span key={i} className="w-[9px] h-4 flex justify-center shrink-0"><span className="w-px bg-[#d3d7de]" /></span>;
        }
        if (item === 'caret' || item === 'caretMuted') {
          return (
            <button key={i} aria-label="More options" className="w-[17px] flex justify-center shrink-0">
              <Caret className={item === 'caret' ? 'text-[#1b1b1b]' : 'text-[#7b7b7b]'} />
            </button>
          );
        }
        return <button key={i} aria-label={item[0]} className="w-6 h-5 flex items-center justify-center shrink-0">{item[1]}</button>;
      })}
    </div>
  );
}

function Scene() {
  return (
    <svg viewBox="808 204 792 374" className="flex-1 min-h-0 w-full" fill="none" role="img" aria-label="Two layer block geometry">
      {/* right domain */}
      <path d="M1026 297L1361 225V305L1131 354Z" fill="#f0b7bb" />
      <path d="M1361 225L1466 283L1361 305Z" fill="#ffbdc3" />
      <path d="M1131 354L1361 305V411L1131 460Z" fill="#d6a2a6" />
      <path d="M1361 305L1466 283V469L1361 411Z" fill="#e2a9ad" />
      <path d="M1131 460L1360 411L1466 469L1131 540Z" fill="#e3abb0" />
      {/* left domain */}
      <path d="M942 315L1026 297V360Z" fill="#c4c2f1" />
      <path d="M942 315L1026 360V482L942 500Z" fill="#bcbeed" />
      <path d="M1026 297L1131 354L1048 372L1026 360Z" fill="#c7c0ef" />
      <path d="M1026 360L1048 372V494L1026 482Z" fill="#c2baea" />
      <path d="M942 500L1026 482L1048 494V558Z" fill="#c6c8fb" />
      <path d="M1048 372L1131 354V540L1048 494Z" fill="#ada5d1" />
      <path d="M1048 494L1131 540L1048 558Z" fill="#afb1df" />
      {/* grid */}
      <g stroke="#404048" strokeOpacity="0.220">
        <path d="M935 357L1353 267.500M935 403L1353 314M935 450L1353 360.500M1144 266V451M1353.500 221V407" />
        <path d="M1372 269L1478 327M1372 316L1478 373.500M1372 362.500L1477 420M1372.500 223V408M1399 238V423M1425.500 252V437M1451.500 266V452" />
        <path d="M942 514L1360 424M969 527.500L1386 438.500M995 542.500L1412 453.500M1022 557L1438 468M1360 424L1466 482.500M1152 469L1256 527" />
      </g>
      <g stroke="#6a6a70">
        <path d="M934.500 496V311L1353.500 221V226M1372.500 233V223L1478 281M1399 238V246M1425.500 252V260M1451.500 266V275" strokeWidth="0.900" />
        <path d="M1466 320.500L1478 327M1466 367L1478 373.500M1466 413.500L1477 420M1449 473L1466 482.500M1239 517.500L1256 527M935 357L942 355.500M935 403L942 401.500M935 450L942 448.500M1047 571.500L942 514L958 510.500M969 527.500L985 524M995 542.500L1012 539M1022 557L1038 553.500" strokeWidth="0.900" />
      </g>
      <g stroke="#5c2f35" strokeOpacity="0.750">
        <path d="M1026 297L1361 225L1466 283L1131 354M1465.500 283V469L1131 540" strokeWidth="0.900" />
        <path d="M1360.500 225V411L1466 469M1360 411L1131 460" strokeOpacity="0.500" />
      </g>
      <g stroke="#4a44e0" strokeLinejoin="round">
        <path d="M942.500 315L1026 297L1131.500 354L1048 372ZM942.500 315V500L1048 558V372M1048 558L1131 540V354" />
        <path d="M1025.500 297V482L1131 540M1025.500 482L942 500" strokeOpacity="0.650" />
      </g>
      {/* orientation triad */}
      <path d="M853 534L873 530" stroke="#4d86bd" strokeWidth="2" />
      <path d="M870 526.500L879 528.500L871 533Z" fill="#4d86bd" />
      <path d="M853 534L864 540" stroke="#cf2466" strokeWidth="2" />
      <path d="M861 541L865 537L870 543Z" fill="#cf2466" stroke="#cf2466" />
      <path d="M853 534V556" stroke="#5aa552" strokeWidth="2" />
      <path d="M850 554H856L853 563Z" fill="#5aa552" />
      <g fontFamily="DejaVu Sans, sans-serif" fontSize="13" fill="#1d1d1d">
        <text x="1378" y="214">0</text>
        <text x="1427" y="242">0.02</text>
        <text x="1454" y="257">0.03</text>
        <text x="1490" y="287">0</text>
        <text x="1490" y="333">0.01</text>
        <text x="1490" y="379">0.02</text>
        <text x="1490" y="426">0.03</text>
        <text x="1464" y="502">0.1</text>
        <text x="1253" y="547">0.05</text>
        <text x="882" y="531">z</text>
        <text x="870" y="549">x</text>
        <text x="849" y="573">y</text>
        <g fontSize="12">
          <text x="1531" y="381">m</text>
          <text x="1274" y="583">m</text>
          <text x="1455" y="209">m</text>
        </g>
      </g>
      <g>
        <path d="M1573 214L1590 211L1595 224L1584 231L1575 226Z" fill="#e6eaf2" />
        <rect x="1577" y="213" width="14" height="12" rx="2" fill="#1e4fa3" />
        <path d="M1580 215H1586L1588 219L1586 223H1580Z" fill="#f1e36c" />
        <path d="M1580 215V223H1582L1583 219Z" fill="#4fb4c9" />
      </g>
    </svg>
  );
}

function GraphicsPanel() {
  return (
    <section className="flex-1 min-h-0 border border-r-0 border-[#cfd5de] bg-linear-to-b from-[#fafbff] from-30% to-[#e4f0fd] flex flex-col">
      <div className="h-[33px] flex items-center justify-between pl-2 pr-1">
        <h2 className="text-[21px] font-light text-[#41659f]">Graphics</h2>
        <PanelTools />
      </div>
      <Toolbar items={toolbarTop} />
      <Toolbar items={toolbarBottom} />
      <div className="h-[3px]" />
      <Scene />
    </section>
  );
}

// ---------- messages ----------

const messageTabs = [
  { name: 'Progress', width: 'w-[63px]' },
  { name: 'Log', width: 'w-8' },
  { name: 'External Process', width: 'w-[131px]', closable: true },
  { name: 'Evaluation 3D', width: 'w-[116px]', closable: true },
];

function CloseMark() {
  return <Svg w={9}><path d="M1 1L8 8M8 1L1 8" stroke="#c3c9d1" strokeWidth="1.300" /></Svg>;
}

function MessagesPanel() {
  return (
    <section className="h-[216px] border border-r-0 border-[#cfd5de] bg-[#fafbff] flex flex-col text-[#222]">
      <div className="h-8 pt-[5px] pl-[3px] pr-1 flex items-start gap-2 border-b border-[#dbe0e8] text-[13px]">
        <button className="w-[91px] h-[27px] bg-[#fcfdff] border border-b-0 border-[#d3d9e3] text-[#3a66a8] flex items-center justify-center gap-1.5">Messages <CloseMark /></button>
        {messageTabs.map((tab) => (
          <button key={tab.name} className={clsx('h-[26px] bg-[#ebebeb] text-black flex items-center justify-center gap-1.5 whitespace-nowrap', tab.width)}>
            {tab.name}
            {tab.closable && <CloseMark />}
          </button>
        ))}
        <div className="ml-auto mt-2"><PanelTools /></div>
      </div>
      <div className="h-7 pl-2 flex items-center">
        <button aria-label="Clear messages"><Svg w={12} h={16}><path d="M1 1L5 8" stroke="#9c6b3c" strokeWidth="2" /><path d="M3 7L6 6L11 12L7 15L4 13Z" fill="#ecd0a4" stroke="#c49a66" /></Svg></button>
      </div>
      <div className="flex-1 ml-[3px] mr-1 mb-0.5 border border-[#d6dae2] flex flex-col">
        <div className="flex-1 flex min-h-0">
          <div className="flex-1 min-w-0 overflow-hidden pt-px pl-0.5">
            <ul className="h-[117px] grid auto-rows-fr items-center text-[12px]">
              {messages.map((line, i) => <li key={i} className="whitespace-pre leading-4">{line}</li>)}
            </ul>
          </div>
          <div className="w-[17px] bg-[#f0f1f3] flex flex-col items-center justify-between py-1.5">
            <Svg w={8} h={5}><path d="M1 4.500L4 1L7 4.500" stroke="#9a9a9a" /></Svg>
            <div className="mt-auto mb-1.5 w-full h-2.5 bg-[#cdcdcd]" />
            <Svg w={8} h={5}><path d="M1 0.500L4 4L7 0.500" stroke="#9a9a9a" /></Svg>
          </div>
        </div>
        <div className="h-[17px] bg-[#f0f1f3] flex items-center">
          <span className="w-[17px] flex justify-center"><Svg w={5} h={8}><path d="M4.500 1L1 4L4.500 7" stroke="#9a9a9a" /></Svg></span>
          <div className="flex-1 h-full"><div className="h-full w-[78%] bg-[#cdcdcd]" /></div>
          <span className="w-[37px] pl-1"><Svg w={5} h={8}><path d="M0.500 1L4 4L0.500 7" stroke="#9a9a9a" /></Svg></span>
        </div>
      </div>
    </section>
  );
}

export default function App() {
  return (
    <div className="h-screen min-h-[780px] flex flex-col bg-[#f8fbff] overflow-hidden font-['Open_Sans','Noto_Sans',sans-serif]">
      <Ribbon />
      <main className="flex-1 min-h-0 mt-1 ml-[3px] grid grid-cols-[352fr_441fr_792fr] grid-rows-1 gap-x-[6px]">
        <ModelBuilder />
        <SettingsPanel />
        <div className="flex flex-col gap-[6px] min-w-0 min-h-0">
          <GraphicsPanel />
          <MessagesPanel />
        </div>
      </main>
    </div>
  );
}
